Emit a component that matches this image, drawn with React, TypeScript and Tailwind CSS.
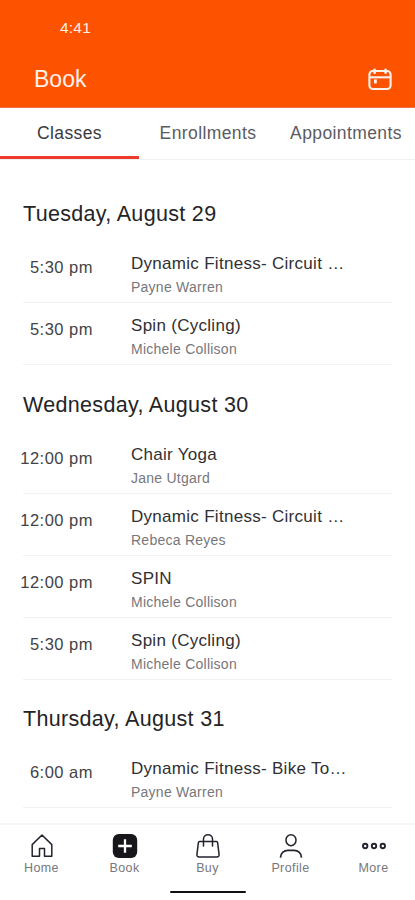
import type { ReactNode } from 'react'

type ClassItem = { time: string; title: string; instructor: string }

const schedule: { day: string; classes: ClassItem[] }[] = [
  {
    day: 'Tuesday, August 29',
    classes: [
      { time: '5:30 pm', title: 'Dynamic Fitness- Circuit …', instructor: 'Payne Warren' },
      { time: '5:30 pm', title: 'Spin (Cycling)', instructor: 'Michele Collison' },
    ],
  },
  {
    day: 'Wednesday, August 30',
    classes: [
      { time: '12:00 pm', title: 'Chair Yoga', instructor: 'Jane Utgard' },
      { time: '12:00 pm', title: 'Dynamic Fitness- Circuit …', instructor: 'Rebeca Reyes' },
      { time: '12:00 pm', title: 'SPIN', instructor: 'Michele Collison' },
      { time: '5:30 pm', title: 'Spin (Cycling)', instructor: 'Michele Collison' },
    ],
  },
  {
    day: 'Thursday, August 31',
    classes: [{ time: '6:00 am', title: 'Dynamic Fitness- Bike To…', instructor: 'Payne Warren' }],
  },
]

function CalendarIcon() {
  return (
    <svg className="h-6 w-[26px]" viewBox="0 0 26 24" fill="none" stroke="#fff1ea" strokeWidth="2.1">
      <rect x="2.4" y="4" width="21.2" height="18" rx="3.5" />
      <path d="M2.4 10.3h21.2" />
      <path strokeLinecap="round" strokeWidth="2.6" d="M7.6 2.8v3M18.6 2.8v3" />
      <path strokeWidth="2.8" d="M8.4 12.4v4" />
    </svg>
  )
}

function NavIcon({ children }: { children: ReactNode }) {
  return (
    <svg className="h-7 w-7" viewBox="0 0 28 28" fill="none" stroke="#23232e" strokeWidth="1.5">
      {children}
    </svg>
  )
}

const navItems = [
  {
    label: 'Home',
    icon: <path strokeLinejoin="round" d="M14 3L4.2 12.6V24.2h7.3v-7.700h5v7.700h7.300V12.600z" />,
  },
  {
    label: 'Book',
    icon: (
      <>
        <rect x="1.8" y="1.9" width="24.4" height="24.2" rx="6" fill="#17171b" stroke="none" />
        <path stroke="#fff" strokeWidth="2.3" d="M14 7.2v13.6M7.2 14h13.6" />
      </>
    ),
  },
  {
    label: 'Buy',
    icon: (
      <>
        <path
          strokeLinejoin="round"
          d="M5.5 9.6h17c.7 0 1 .4 1.1 1l1.5 12c.1 1.500-.7 2.400-2.200 2.400H5.100c-1.500 0-2.300-.9-2.200-2.400l1.500-12c.1-.6.4-1 1.100-1z"
        />
        <path strokeLinecap="round" d="M9.5 14V7C9.5 1.200 18.500 1.200 18.500 7v7" />
      </>
    ),
  },
  {
    label: 'Profile',
    icon: (
      <>
        <ellipse cx="14" cy="8.2" rx="5" ry="5.500" />
        <path strokeWidth="1.7" d="M3.500 25.600c.3-4.800 3.600-7.300 7.500-7.300h6c3.900 0 7.200 2.500 7.500 7.300" />
      </>
    ),
  },
  {
    label: 'More',
    icon: (
      <g strokeWidth="1.9">
        <circle cx="5.2" cy="14" r="2.2" />
        <circle cx="14" cy="14" r="2.2" />
        <circle cx="22.8" cy="14" r="2.2" />
      </g>
    ),
  },
]

function ClassRow({ time, title, instructor }: ClassItem) {
  return (
    <li className="flex h-[62px] flex-col">
      <div className="flex flex-1">
        <span className="w-[93px] shrink-0 pt-[16px] text-right text-[16.5px] leading-5 tracking-[0.5px] text-[#434346]">
          {time}
        </span>
        <div className="ml-[38px] min-w-0 pt-[13px] whitespace-nowrap">
          <p className="text-[17px] leading-5 tracking-[0.29px] text-[#303033]">{title}</p>
          <p className="mt-[5px] text-[14px] leading-4 tracking-[0.25px] text-[#77777b]">{instructor}</p>
        </div>
      </div>
      <div className="mx-[23px] h-px shrink-0 bg-[#f2f2f3]" />
    </li>
  )
}

export default function App() {
  return (
    <div className="flex h-[900px] w-[415px] flex-col overflow-hidden bg-white font-['Liberation_Sans',Arial,sans-serif]">
      <header className="h-[108px] shrink-0 border-b border-[#f4703c] bg-[#fd5200] text-[#fff1ea]">
        <div className="pt-[18px] pl-[60px] text-[15.5px] leading-5 tracking-[0.2px]">4:41</div>
        <div className="mt-[27px] flex items-center justify-between pr-[22px] pl-[34px]">
          <h1 className="text-[23px] leading-7">Book</h1>
          <CalendarIcon />
        </div>
      </header>

      <nav className="flex h-[52px] shrink-0 border-b border-[#f0f0f2] text-[17.5px] leading-[51px] tracking-[0.4px] text-[#5b5b60]">
        <button className="h-[51px] w-[139px] border-b-[3px] border-[#ee3a2a] text-[#3a3a3e]">Classes</button>
        <button className="w-[138px]">Enrollments</button>
        <button className="w-[138px]">Appointments</button>
      </nav>

      <main className="min-h-0 flex-1 overflow-hidden pt-[25px]">
        {schedule.map(({ day, classes }) => (
          <section key={day} className="mb-[10.6px]">
            <h2 className="h-[56px] pt-[15px] pl-[23px] text-[21.5px] leading-7 tracking-[0.32px] text-[#242427]">
              {day}
            </h2>
            <ul>
              {classes.map((item, i) => (
                <ClassRow key={i} {...item} />
              ))}
            </ul>
          </section>
        ))}
      </main>

      <footer className="h-[77px] shrink-0 border-t-2 border-[#f7f7f8]">
        <div className="flex">
          {navItems.map(({ label, icon }) => (
            <button key={label} className="flex w-[83px] flex-col items-center pt-[7px]">
              <NavIcon>{icon}</NavIcon>
              <span className="text-[12.5px] leading-4 tracking-[0.4px] text-[#77777c]">{label}</span>
            </button>
          ))}
        </div>
        <div className="mx-auto mt-[15px] h-[2px] w-[76px] rounded-full bg-[#101014]" />
      </footer>
    </div>
  )
}
